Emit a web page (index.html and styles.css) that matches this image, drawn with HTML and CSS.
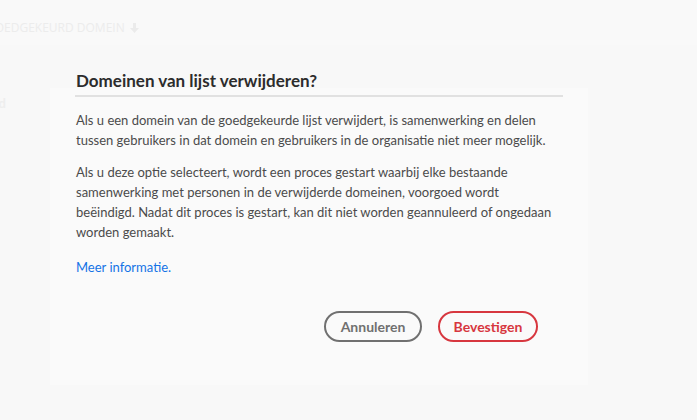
FILE: index.html
```html
<!DOCTYPE html>
<html lang="nl">
<head>
<meta charset="utf-8">
<title>Domeinen van lijst verwijderen?</title>
<link rel="stylesheet" href="styles.css">
</head>
<body>
<div class="page">
  <div class="topbar">
    <span class="col-head">GOEDGEKEURD DOMEIN <svg class="arrow" width="9" height="10" viewBox="0 0 9 10" aria-hidden="true"><path d="M3 0h3v5h3L4.5 10 0 5h3z" fill="#ebebeb"/></svg></span>
  </div>
  <div class="content">
    <span class="row-text">Goedgekeurd</span>
  </div>
</div>
<div class="dialog" role="dialog">
  <h2 class="dialog-title">Domeinen van lijst verwijderen?</h2>
  <div class="dialog-body">
    <p>Als u een domein van de goedgekeurde lijst verwijdert, is samenwerking en delen tussen gebruikers in dat domein en gebruikers in de organisatie niet meer mogelijk.</p>
    <p>Als u deze optie selecteert, wordt een proces gestart waarbij elke bestaande samenwerking met personen in de verwijderde domeinen, voorgoed wordt beëindigd. Nadat dit proces is gestart, kan dit niet worden geannuleerd of ongedaan worden gemaakt.</p>
    <p><a class="link" href="#">Meer informatie.</a></p>
  </div>
  <div class="dialog-actions">
    <button class="btn btn-secondary">Annuleren</button>
    <button class="btn btn-warning">Bevestigen</button>
  </div>
</div>
</body>
</html>
```
FILE: styles.css
```css
html, body {
  margin: 0;
  padding: 0;
  background: #f8f8f8;
  width: 697px;
  height: 420px;
  overflow: hidden;
}
body {
  font-family: "Lato", "Liberation Sans", sans-serif;
  position: relative;
}
.page {
  display: flex;
  flex-direction: column;
}
.topbar {
  height: 45px;
  box-sizing: border-box;
  padding-top: 16px;
  background: #f9f9f9;
}
.col-head {
  display: inline-flex;
  align-items: center;
  gap: 5px;
  font-family: "Open Sans", sans-serif;
  font-size: 12px;
  line-height: 18px;
  color: #ececec;
  margin-left: -14px;
  white-space: nowrap;
}
.arrow {
  display: block;
}
.content {
  padding-top: 47px;
}
.row-text {
  font-weight: bold;
  font-size: 13px;
  color: #eeeeee;
  margin-left: -72px;
  white-space: nowrap;
}
.dialog {
  position: absolute;
  left: 50px;
  top: 88px;
  width: 538px;
  height: 297px;
  box-sizing: border-box;
  padding: 0 25px;
  background: #fafafa;
  display: flex;
  flex-direction: column;
}
.dialog-title {
  margin: -18px 0 0 0;
  font-size: 17px;
  font-weight: 700;
  color: #2c2c2c;
  padding: 0 0 3px 1px;
  border-bottom: 2px solid #e1e1e1;
  line-height: 22px;
}
.dialog-body {
  padding: 13px 10px 0 1px;
  font-size: 13px;
  line-height: 20px;
  color: #4b4b4b;
}
.dialog-body p {
  margin: 0 0 12px 0;
}
.dialog-body p:nth-child(2) {
  margin-bottom: 15px;
}
.dialog-body p:last-child {
  margin-bottom: 0;
}
.link {
  color: #1473e6;
  text-decoration: none;
}
.dialog-actions {
  display: flex;
  justify-content: flex-end;
  gap: 16px;
  padding-right: 25px;
  margin-top: 34px;
}
.btn {
  height: 31px;
  box-sizing: border-box;
  border-radius: 16px;
  border: 2px solid;
  background: transparent;
  font-family: "Lato", "Liberation Sans", sans-serif;
  font-size: 14px;
  font-weight: 700;
  padding: 0 12px;
}
.btn-secondary {
  width: 98px;
  border-color: #707070;
  color: #707070;
}
.btn-warning {
  width: 100px;
  border-color: #d7373f;
  color: #d7373f;
}
```
